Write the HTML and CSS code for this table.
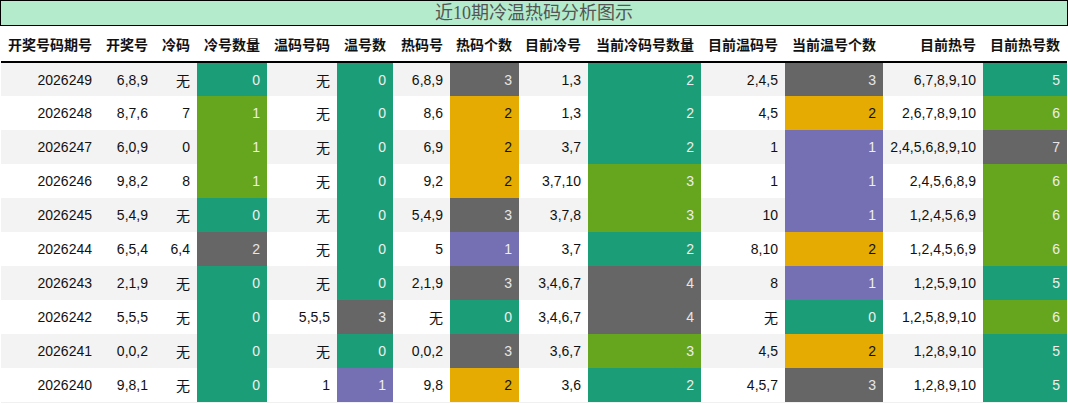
FILE: index.html
```html
<!DOCTYPE html>
<html lang="zh">
<head>
<meta charset="utf-8">
<title>近10期冷温热码分析图示</title>
<link rel="stylesheet" href="styles.css">
</head>
<body>
<div class="chart">
  <div class="title">近10期冷温热码分析图示</div>
  <table class="grid">
    <colgroup>
      <col class="w98"><col class="w56"><col class="w42"><col class="w70"><col class="w70"><col class="w56"><col class="w57"><col class="w69"><col class="w69"><col class="w113"><col class="w84"><col class="w98"><col class="w100"><col class="w84">
    </colgroup>
    <thead>
      <tr><th>开奖号码期号</th><th>开奖号</th><th>冷码</th><th>冷号数量</th><th>温码号码</th><th>温号数</th><th>热码号</th><th>热码个数</th><th>目前冷号</th><th>当前冷码号数量</th><th>目前温码号</th><th>当前温号个数</th><th>目前热号</th><th>目前热号数</th></tr>
    </thead>
    <tbody>
      <tr><td>2026249</td><td>6,8,9</td><td>无</td><td class="c-teal">0</td><td>无</td><td class="c-teal">0</td><td>6,8,9</td><td class="c-gray">3</td><td>1,3</td><td class="c-teal">2</td><td>2,4,5</td><td class="c-gray">3</td><td>6,7,8,9,10</td><td class="c-teal">5</td></tr>
      <tr><td>2026248</td><td>8,7,6</td><td>7</td><td class="c-green">1</td><td>无</td><td class="c-teal">0</td><td>8,6</td><td class="c-gold">2</td><td>1,3</td><td class="c-teal">2</td><td>4,5</td><td class="c-gold">2</td><td>2,6,7,8,9,10</td><td class="c-green">6</td></tr>
      <tr><td>2026247</td><td>6,0,9</td><td>0</td><td class="c-green">1</td><td>无</td><td class="c-teal">0</td><td>6,9</td><td class="c-gold">2</td><td>3,7</td><td class="c-teal">2</td><td>1</td><td class="c-purple">1</td><td>2,4,5,6,8,9,10</td><td class="c-gray">7</td></tr>
      <tr><td>2026246</td><td>9,8,2</td><td>8</td><td class="c-green">1</td><td>无</td><td class="c-teal">0</td><td>9,2</td><td class="c-gold">2</td><td>3,7,10</td><td class="c-green">3</td><td>1</td><td class="c-purple">1</td><td>2,4,5,6,8,9</td><td class="c-green">6</td></tr>
      <tr><td>2026245</td><td>5,4,9</td><td>无</td><td class="c-teal">0</td><td>无</td><td class="c-teal">0</td><td>5,4,9</td><td class="c-gray">3</td><td>3,7,8</td><td class="c-green">3</td><td>10</td><td class="c-purple">1</td><td>1,2,4,5,6,9</td><td class="c-green">6</td></tr>
      <tr><td>2026244</td><td>6,5,4</td><td>6,4</td><td class="c-gray">2</td><td>无</td><td class="c-teal">0</td><td>5</td><td class="c-purple">1</td><td>3,7</td><td class="c-teal">2</td><td>8,10</td><td class="c-gold">2</td><td>1,2,4,5,6,9</td><td class="c-green">6</td></tr>
      <tr><td>2026243</td><td>2,1,9</td><td>无</td><td class="c-teal">0</td><td>无</td><td class="c-teal">0</td><td>2,1,9</td><td class="c-gray">3</td><td>3,4,6,7</td><td class="c-gray">4</td><td>8</td><td class="c-purple">1</td><td>1,2,5,9,10</td><td class="c-teal">5</td></tr>
      <tr><td>2026242</td><td>5,5,5</td><td>无</td><td class="c-teal">0</td><td>5,5,5</td><td class="c-gray">3</td><td>无</td><td class="c-teal">0</td><td>3,4,6,7</td><td class="c-gray">4</td><td>无</td><td class="c-teal">0</td><td>1,2,5,8,9,10</td><td class="c-green">6</td></tr>
      <tr><td>2026241</td><td>0,0,2</td><td>无</td><td class="c-teal">0</td><td>无</td><td class="c-teal">0</td><td>0,0,2</td><td class="c-gray">3</td><td>3,6,7</td><td class="c-green">3</td><td>4,5</td><td class="c-gold">2</td><td>1,2,8,9,10</td><td class="c-teal">5</td></tr>
      <tr><td>2026240</td><td>9,8,1</td><td>无</td><td class="c-teal">0</td><td>1</td><td class="c-purple">1</td><td>9,8</td><td class="c-gold">2</td><td>3,6</td><td class="c-teal">2</td><td>4,5,7</td><td class="c-gray">3</td><td>1,2,8,9,10</td><td class="c-teal">5</td></tr>
    </tbody>
  </table>
</div>
</body>
</html>
```
FILE: styles.css
```css
html, body {
  margin: 0;
  padding: 0;
  background: #ffffff;
}

.chart {
  width: 1068px;
  font-family: "Liberation Sans", Arial, "Noto Sans CJK SC", sans-serif;
  color: #111;
}

.title {
  box-sizing: border-box;
  height: 26px;
  border: 1px solid #000;
  background: #b3ebcc;
  color: #555;
  font-family: "Liberation Serif", "Noto Sans CJK SC", serif;
  font-size: 18px;
  line-height: 24px;
  text-align: center;
}

.grid {
  margin-left: 1px;
  width: 1066px;
  table-layout: fixed;
  border-collapse: collapse;
  border-spacing: 0;
  font-size: 14px;
}

.w98 { width: 98px; }
.w56 { width: 56px; }
.w42 { width: 42px; }
.w70 { width: 70px; }
.w57 { width: 57px; }
.w69 { width: 69px; }
.w113 { width: 113px; }
.w84 { width: 84px; }
.w100 { width: 100px; }

.grid th {
  height: 35px;
  padding: 0 7px 0 0;
  text-align: right;
  font-weight: bold;
  font-size: 14px;
  font-family: "Liberation Sans", "Noto Sans CJK SC", sans-serif;
  color: #111;
  border-bottom: 2px solid #000;
  white-space: nowrap;
  vertical-align: middle;
}

.grid td {
  box-sizing: border-box;
  height: 34px;
  padding: 0 7px 0 0;
  text-align: right;
  vertical-align: middle;
  white-space: nowrap;
}

.grid tbody tr:nth-child(odd) td {
  background: #f3f3f3;
}

.grid tbody tr:last-child td {
  border-bottom: 1px solid #f0f0f0;
}

.grid tbody tr td.c-teal { background: #1b9e77; color: #eeeeee; }
.grid tbody tr td.c-green { background: #66a61e; color: #eeeeee; }
.grid tbody tr td.c-gray { background: #666666; color: #e6e6e6; }
.grid tbody tr td.c-purple { background: #7570b3; color: #eeeeee; }
.grid tbody tr td.c-gold { background: #e6ab02; color: #111111; }
```
